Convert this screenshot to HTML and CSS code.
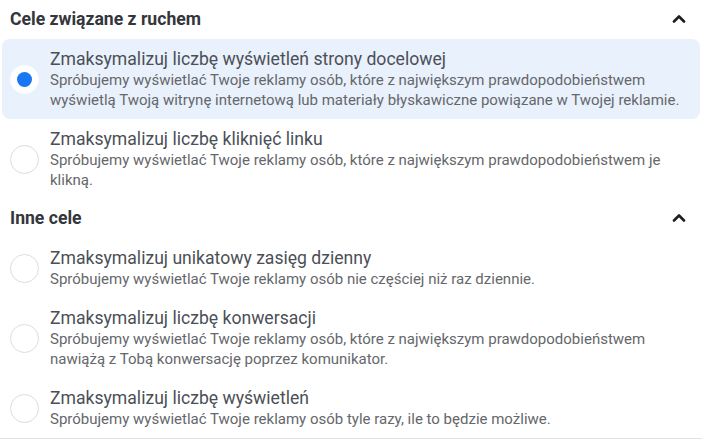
FILE: index.html
```html
<!DOCTYPE html>
<html lang="pl">
<head>
<meta charset="utf-8">
<link rel="stylesheet" href="styles.css">
</head>
<body>
<div class="panel">
  <div class="section-head">
    <span class="section-title">Cele związane z ruchem</span>
    <svg class="chev" viewBox="0 0 14 9" width="14" height="9"><path d="M2 7.5 L7 2.5 L12 7.5" fill="none" stroke="#1c1e21" stroke-width="2.6" stroke-linecap="round" stroke-linejoin="round"/></svg>
  </div>
  <div class="option selected">
    <span class="radio"><span class="dot"></span></span>
    <div class="text">
      <div class="title">Zmaksymalizuj liczbę wyświetleń strony docelowej</div>
      <div class="desc">Spróbujemy wyświetlać Twoje reklamy osób, które z największym prawdopodobieństwem wyświetlą Twoją witrynę internetową lub materiały błyskawiczne powiązane w Twojej reklamie.</div>
    </div>
  </div>
  <div class="option">
    <span class="radio"></span>
    <div class="text">
      <div class="title">Zmaksymalizuj liczbę kliknięć linku</div>
      <div class="desc">Spróbujemy wyświetlać Twoje reklamy osób, które z największym prawdopodobieństwem je klikną.</div>
    </div>
  </div>
  <div class="section-head">
    <span class="section-title">Inne cele</span>
    <svg class="chev" viewBox="0 0 14 9" width="14" height="9"><path d="M2 7.5 L7 2.5 L12 7.5" fill="none" stroke="#1c1e21" stroke-width="2.6" stroke-linecap="round" stroke-linejoin="round"/></svg>
  </div>
  <div class="option">
    <span class="radio"></span>
    <div class="text">
      <div class="title">Zmaksymalizuj unikatowy zasięg dzienny</div>
      <div class="desc">Spróbujemy wyświetlać Twoje reklamy osób nie częściej niż raz dziennie.</div>
    </div>
  </div>
  <div class="option">
    <span class="radio"></span>
    <div class="text">
      <div class="title">Zmaksymalizuj liczbę konwersacji</div>
      <div class="desc">Spróbujemy wyświetlać Twoje reklamy osób, które z największym prawdopodobieństwem nawiążą z Tobą konwersację poprzez komunikator.</div>
    </div>
  </div>
  <div class="option last">
    <span class="radio"></span>
    <div class="text">
      <div class="title">Zmaksymalizuj liczbę wyświetleń</div>
      <div class="desc">Spróbujemy wyświetlać Twoje reklamy osób tyle razy, ile to będzie możliwe.</div>
    </div>
  </div>
</div>
</body>
</html>
```
FILE: styles.css
```css
html, body {
  margin: 0;
  padding: 0;
  background: #ffffff;
}
body {
  font-family: Roboto, "Liberation Sans", Arial, sans-serif;
  width: 702px;
  height: 439px;
  overflow: hidden;
}
.panel {
  display: flex;
  flex-direction: column;
  border-bottom: 1px solid #e2e3e6;
  width: 702px;
}
.section-head {
  display: flex;
  align-items: center;
  justify-content: space-between;
  height: 39px;
  padding: 0 16px 2px 10px;
  box-sizing: border-box;
}
.section-title {
  font-size: 17.6px;
  font-weight: 700;
  color: #33363b;
}
.chev {
  display: block;
}
.option {
  display: flex;
  align-items: center;
  gap: 11px;
  padding: 9px 6px 9px 10px;
  margin: 0 2px;
  border-radius: 8px;
}
.option.selected {
  background: #e9f1fc;
}
.radio {
  flex: none;
  width: 29px;
  height: 29px;
  box-sizing: border-box;
  border-radius: 50%;
  border: 1px solid #dcdde0;
  background: #ffffff;
  display: flex;
  align-items: center;
  justify-content: center;
  margin-left: -2px;
}
.dot {
  width: 15px;
  height: 15px;
  border-radius: 50%;
  background: #1877f2;
}
.selected .radio {
  border-color: #ffffff;
}
.text {
  display: flex;
  flex-direction: column;
}
.title {
  font-size: 17.6px;
  line-height: 22px;
  color: #4b4f56;
}
.desc {
  font-size: 15px;
  line-height: 20px;
  color: #65676b;
}
```
